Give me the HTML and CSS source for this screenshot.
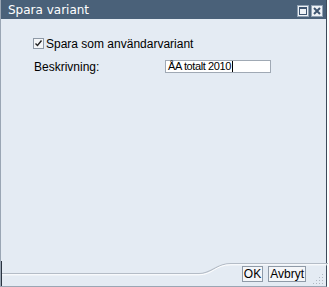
FILE: index.html
```html
<!DOCTYPE html>
<html>
<head>
<meta charset="utf-8">
<link rel="stylesheet" href="styles.css">
</head>
<body>
<div class="window">
  <div class="titlebar">
    <span class="title">Spara variant</span>
    <div class="tools">
      <span class="tool"><svg width="12" height="12" viewBox="0 0 12 12"><rect x="2.5" y="2.5" width="7" height="7" fill="none" stroke="#3f5570" stroke-width="1"/><rect x="2" y="2" width="8" height="2" fill="#3f5570"/></svg></span>
      <span class="tool"><svg width="12" height="12" viewBox="0 0 12 12"><path d="M3 3 L9 9 M9 3 L3 9" stroke="#3f5570" stroke-width="2"/></svg></span>
    </div>
  </div>
  <div class="body">
    <label class="check-row">
      <span class="checkbox"><svg width="9" height="9" viewBox="0 0 9 9"><path d="M1.5 4.5 L3.5 6.5 L7.5 1.5" fill="none" stroke="#222" stroke-width="1.4"/></svg></span>
      <span>Spara som användarvariant</span>
    </label>
    <div class="field-row">
      <span class="field-label">Beskrivning:</span>
      <span class="input">ÅA totalt 2010<span class="caret"></span></span>
    </div>
  </div>
  <div class="footer">
    <svg class="deco" width="326" height="25" viewBox="0 0 326 25">
      <path d="M0 12.5 H197 C211 12.5 213 2.5 229 2.5 H326" fill="none" stroke="#b4bcc6" stroke-width="1.2"/>
      <path d="M0 13.8 H197 C211 13.8 213 3.8 229 3.8 H326" fill="none" stroke="#ffffff" stroke-width="1"/>
    </svg>
    <div class="buttons">
      <button class="btn">OK</button>
      <button class="btn">Avbryt</button>
    </div>
    <div class="grip">
      <svg width="11" height="11" viewBox="0 0 11 11" fill="#b0b8c2">
        <rect x="9" y="1" width="1" height="1"/>
        <rect x="6" y="4" width="1" height="1"/><rect x="9" y="4" width="1" height="1"/>
        <rect x="3" y="7" width="1" height="1"/><rect x="6" y="7" width="1" height="1"/><rect x="9" y="7" width="1" height="1"/>
        <rect x="0" y="10" width="1" height="1"/><rect x="3" y="10" width="1" height="1"/><rect x="6" y="10" width="1" height="1"/><rect x="9" y="10" width="1" height="1"/>
      </svg>
    </div>
  </div>
</div>
</body>
</html>
```
FILE: styles.css
```css
html, body {
  margin: 0;
  padding: 0;
  background: #ffffff;
}
body {
  width: 329px;
  height: 287px;
  overflow: hidden;
  font-family: "Liberation Sans", Arial, sans-serif;
  font-size: 12px;
  color: #000;
}
.window {
  width: 327px;
  height: 287px;
  box-sizing: border-box;
  border-left: 1px solid #9aa6b4;
  border-right: 1px solid #3c4a5a;
  border-bottom: 1px solid #9aa6b4;
  background: #e4ebf3;
  display: flex;
  flex-direction: column;
}
.titlebar {
  height: 19px;
  flex: none;
  background: #4a6179;
  display: flex;
  align-items: flex-end;
  justify-content: space-between;
  padding: 0 3px 2px 7px;
  box-sizing: border-box;
}
.title {
  color: #ffffff;
  font-family: "DejaVu Sans", Verdana, sans-serif;
  font-size: 12px;
  line-height: 14px;
}
.tools {
  display: flex;
  gap: 2px;
}
.tool {
  width: 12px;
  height: 12px;
  background: #eef2f6;
  display: block;
  border: 1px solid #8fa0b2;
  box-sizing: border-box;
}
.tool svg { display: block; margin: -1px; }
.body {
  flex: 1;
  padding: 18px 0 0 32px;
}
.check-row {
  display: flex;
  align-items: center;
  gap: 2px;
  height: 13px;
}
.checkbox {
  width: 9px;
  height: 9px;
  background: #f4f6f8;
  border: 1px solid #8e99a6;
  display: block;
}
.checkbox svg { display: block; }
.field-row {
  display: flex;
  align-items: center;
  margin-top: 10px;
  height: 13px;
}
.field-label {
  width: 131px;
  padding-left: 1px;
}
.input {
  width: 106px;
  height: 13px;
  box-sizing: border-box;
  border: 1px solid #a0a9b4;
  background: #fff;
  font-size: 11px;
  letter-spacing: -0.4px;
  line-height: 11px;
  padding-left: 2px;
  display: flex;
  align-items: center;
}
.caret {
  display: inline-block;
  width: 1px;
  height: 11px;
  margin-left: 1px;
  background: #000;
}
.footer {
  height: 25px;
  flex: none;
  position: relative;
  display: flex;
  align-items: flex-end;
  justify-content: flex-end;
  padding: 0 2px 2px 0;
  box-sizing: border-box;
  border-left: 1px solid #2a3340;
}
.deco {
  position: absolute;
  left: 0;
  top: 0;
}
.buttons {
  position: relative;
  display: flex;
  gap: 5px;
  margin-right: 7px;
  margin-bottom: 2px;
}
.btn {
  font-family: "Liberation Sans", Arial, sans-serif;
  font-size: 12px;
  height: 16px;
  padding: 0 1px;
  border: 1px solid #8f9aa7;
  background: #f4f6f9;
  color: #000;
  line-height: 13px;
  margin: 0;
}
.grip {
  position: relative;
}
.grip svg { display: block; }
```
